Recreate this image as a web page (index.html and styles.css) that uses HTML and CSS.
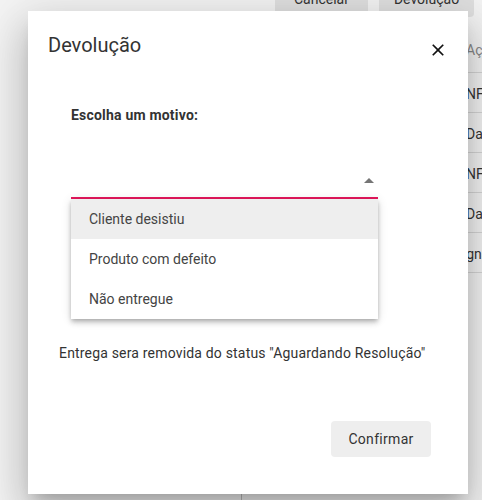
FILE: index.html
```html
<!DOCTYPE html>
<html lang="pt">
<head>
<meta charset="utf-8">
<title>Devolução</title>
<link rel="stylesheet" href="styles.css">
</head>
<body>
<div class="page">
  <div class="toolbar">
    <button class="tb-btn">Cancelar</button>
    <button class="tb-btn wide">Devolução</button>
  </div>
  <div class="main">
    <div class="left-col"></div>
    <div class="table">
      <div class="th">Ações</div>
      <div class="tr">NF-e 10234</div>
      <div class="tr">Data 12/03</div>
      <div class="tr">NF-e 10235</div>
      <div class="tr">Data 14/03</div>
      <div class="tr cut">Designação</div>
    </div>
  </div>
</div>

<div class="dialog">
  <div class="dlg-header">
    <h2 class="dlg-title">Devolução</h2>
    <svg class="close" viewBox="0 0 24 24" aria-hidden="true"><path d="M19 6.41L17.59 5 12 10.59 6.41 5 5 6.41 10.59 12 5 17.59 6.41 19 12 13.41 17.59 19 19 17.59 13.41 12z"/></svg>
  </div>
  <div class="field">
    <label class="field-label">Escolha um motivo:</label>
    <div class="select"><span class="arrow"></span></div>
    <div class="panel">
      <div class="option active">Cliente desistiu</div>
      <div class="option">Produto com defeito</div>
      <div class="option">Não entregue</div>
    </div>
  </div>
  <p class="msg">Entrega sera removida do status "Aguardando Resolução"</p>
  <div class="actions">
    <button class="btn">Confirmar</button>
  </div>
</div>
</body>
</html>
```

FILE: styles.css
```css
html, body {
  margin: 0;
  padding: 0;
}
body {
  width: 482px;
  height: 500px;
  overflow: hidden;
  position: relative;
  background: #f4f4f4;
  font-family: Roboto, "Liberation Sans", sans-serif;
}
.page {
  width: 482px;
  height: 500px;
}
.toolbar {
  display: flex;
  gap: 11px;
  padding-left: 275px;
  margin-top: -19px;
}
.tb-btn {
  width: 93px;
  height: 36px;
  border: 0;
  border-radius: 4px;
  background: #e0e0e0;
  font-family: Roboto, "Liberation Sans", sans-serif;
  font-size: 14px;
  line-height: 36px;
  color: #333;
  padding: 0;
  flex: none;
}
.tb-btn.wide {
  width: 95px;
}
.main {
  display: flex;
  margin-top: 11px;
}
.left-col {
  width: 241px;
  height: 472px;
  border-right: 1px solid #bdbdbd;
  flex: none;
}
.table {
  margin-left: 224px;
  width: 300px;
  flex: none;
  white-space: nowrap;
  font-size: 14px;
  color: #333;
}
.th {
  height: 44px;
  line-height: 44px;
  border-bottom: 1px solid #d6d6d6;
  color: #888;
}
.tr {
  height: 39px;
  line-height: 42px;
  border-bottom: 1px solid #d6d6d6;
}
.tr.cut {
  text-indent: -27px;
}

.dialog {
  position: absolute;
  left: 28px;
  top: 11px;
  width: 440px;
  height: 483px;
  box-sizing: border-box;
  background: #fff;
  box-shadow: 0 11px 15px -7px rgba(0,0,0,.2), 0 24px 38px 3px rgba(0,0,0,.14), 0 9px 46px 8px rgba(0,0,0,.12);
}
.dlg-header {
  display: flex;
  justify-content: space-between;
  align-items: flex-start;
  padding: 18px 20px 0 20px;
}
.dlg-title {
  margin: 0;
  font-size: 20px;
  font-weight: 400;
  line-height: 32px;
  color: #333;
}
.close {
  width: 20px;
  height: 20px;
  margin-top: 11px;
  fill: #111;
}
.field {
  position: relative;
  margin: 44px 0 0 43px;
  width: 307px;
}
.field-label {
  display: block;
  font-size: 14px;
  font-weight: 700;
  line-height: 20px;
  letter-spacing: 0.2px;
  color: #333;
}
.select {
  height: 74px;
  box-sizing: border-box;
  border-bottom: 2px solid #e5175c;
  display: flex;
  justify-content: flex-end;
  align-items: flex-end;
  padding: 0 4px 14px 0;
}
.arrow {
  width: 0;
  height: 0;
  border-left: 5px solid transparent;
  border-right: 5px solid transparent;
  border-bottom: 5px solid #757575;
}
.panel {
  position: absolute;
  top: 100%;
  left: 0;
  right: 0;
  background: #fff;
  z-index: 2;
  box-shadow: 0 2px 4px -1px rgba(0,0,0,.2), 0 4px 5px 0 rgba(0,0,0,.14), 0 1px 10px 0 rgba(0,0,0,.12);
}
.option {
  height: 40px;
  line-height: 40px;
  padding-left: 18px;
  font-size: 14px;
  color: #444;
}
.option.active {
  background: #eeeeee;
}
.msg {
  margin: 144px 0 0 31px;
  font-size: 14px;
  line-height: 20px;
  letter-spacing: 0.18px;
  color: #333;
}
.actions {
  display: flex;
  justify-content: flex-end;
  padding-right: 37px;
  margin-top: 58px;
}
.btn {
  width: 100px;
  height: 36px;
  border: 0;
  border-radius: 4px;
  background: #eeeeee;
  font-family: Roboto, "Liberation Sans", sans-serif;
  font-size: 14px;
  letter-spacing: 0.3px;
  color: #333;
  padding: 0;
}
```
